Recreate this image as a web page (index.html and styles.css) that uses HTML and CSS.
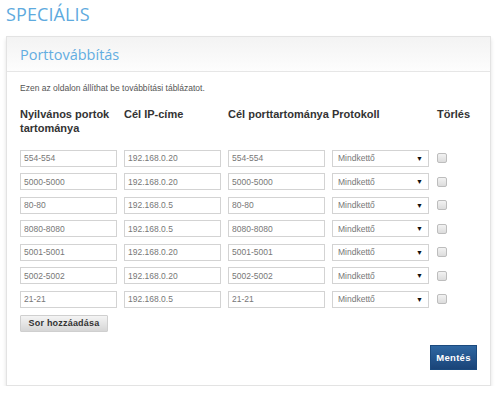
FILE: index.html
```html
<!DOCTYPE html>
<html lang="hu">
<head>
<meta charset="utf-8">
<title>Speciális</title>
<link rel="stylesheet" href="styles.css">
</head>
<body>
<h1 class="page-title">SPECIÁLIS</h1>
<section class="panel">
  <header class="panel-head"><h2 class="panel-title">Porttovábbítás</h2></header>
  <div class="panel-body">
    <p class="desc">Ezen az oldalon állíthat be továbbítási táblázatot.</p>
    <div class="grid">
      <div class="th">Nyilvános portok tartománya</div>
      <div class="th">Cél IP-címe</div>
      <div class="th th-nowrap">Cél porttartománya</div>
      <div class="th">Protokoll</div>
      <div class="th th-del">Törlés</div>

      <input class="field" value="554-554"><input class="field" value="192.168.0.20"><input class="field" value="554-554">
      <div class="sel">Mindkettő<span class="arrow">▼</span></div><span class="chk"></span>

      <input class="field" value="5000-5000"><input class="field" value="192.168.0.20"><input class="field" value="5000-5000">
      <div class="sel">Mindkettő<span class="arrow">▼</span></div><span class="chk"></span>

      <input class="field" value="80-80"><input class="field" value="192.168.0.5"><input class="field" value="80-80">
      <div class="sel">Mindkettő<span class="arrow">▼</span></div><span class="chk"></span>

      <input class="field" value="8080-8080"><input class="field" value="192.168.0.5"><input class="field" value="8080-8080">
      <div class="sel">Mindkettő<span class="arrow">▼</span></div><span class="chk"></span>

      <input class="field" value="5001-5001"><input class="field" value="192.168.0.20"><input class="field" value="5001-5001">
      <div class="sel">Mindkettő<span class="arrow">▼</span></div><span class="chk"></span>

      <input class="field" value="5002-5002"><input class="field" value="192.168.0.20"><input class="field" value="5002-5002">
      <div class="sel">Mindkettő<span class="arrow">▼</span></div><span class="chk"></span>

      <input class="field" value="21-21"><input class="field" value="192.168.0.5"><input class="field" value="21-21">
      <div class="sel">Mindkettő<span class="arrow">▼</span></div><span class="chk"></span>
    </div>
    <button class="btn-add">Sor hozzáadása</button>
    <div class="actions"><button class="btn-save">Mentés</button></div>
  </div>
</section>
</body>
</html>
```
FILE: styles.css
```css
html, body { margin: 0; padding: 0; background: #fff; }
body {
  padding: 0 9px 0 6px;
  font-family: "Liberation Sans", Arial, sans-serif;
  color: #333;
}
.page-title {
  margin: 0;
  padding-top: 3px;
  height: 33px;
  font-family: "Open Sans", sans-serif;
  font-weight: 500;
  font-size: 18px;
  line-height: 22px;
  color: #5eaade;
  letter-spacing: 0.1px;
}
.panel {
  width: 483px;
  border: 1px solid #e3e3e3;
  background: #fff;
  box-shadow: 0 3px 4px rgba(0,0,0,0.12);
}
.panel-head {
  height: 34px;
  border-bottom: 1px solid #e6e6e6;
  background: linear-gradient(#f3f3f3, #fdfdfd);
  padding: 0 13px;
  display: flex;
  align-items: center;
}
.panel-title {
  margin: 0;
  font-family: "Open Sans", sans-serif;
  font-weight: 400;
  font-size: 14.5px;
  color: #62ade1;
}
.panel-body { padding: 11px 13px 15px; }
.desc {
  margin: 0 0 13px;
  font-size: 8.5px;
  line-height: 11px;
  color: #555;
}
.grid {
  display: grid;
  grid-template-columns: 97px 97px 97px 97px auto;
  column-gap: 7px;
  row-gap: 6.5px;
  align-items: center;
}
.th {
  align-self: start;
  font-weight: bold;
  font-size: 11px;
  line-height: 14px;
  color: #333;
  margin-bottom: 6px;
  height: 30px;
}
.th-nowrap { white-space: nowrap; }
.th-del { padding-left: 1px; }
.field, .sel {
  box-sizing: border-box;
  height: 17px;
  width: 97px;
  margin: 0;
  border: 1px solid #d3d3d3;
  background: #fff;
  font-family: "Liberation Sans", Arial, sans-serif;
  font-size: 8.5px;
  color: #777;
  padding: 0 3px;
  outline: none;
}
.sel {
  display: flex;
  align-items: center;
  justify-content: space-between;
  padding: 0 5px 0 5px;
}
.arrow { color: #111; font-size: 7px; }
.chk {
  width: 8px;
  height: 8px;
  border: 1px solid #bdbdbd;
  border-radius: 2px;
  background: linear-gradient(#f2f2f2, #dcdcdc);
  margin-left: 1px;
}
.btn-add {
  margin-top: 7px;
  height: 17px;
  width: 88px;
  padding: 0;
  border: 1px solid #cfcfcf;
  border-radius: 1px;
  background: linear-gradient(#f4f4f4, #d6d6d6);
  font-family: "Liberation Sans", Arial, sans-serif;
  font-weight: bold;
  font-size: 9px;
  letter-spacing: 0.2px;
  color: #333;
}
.actions { display: flex; justify-content: flex-end; margin-top: 13px; }
.btn-save {
  width: 47px;
  height: 25px;
  padding: 0;
  border: 1px solid #1b4a7e;
  background: linear-gradient(#2f67a2, #1a4478);
  color: #fff;
  font-family: "Liberation Sans", Arial, sans-serif;
  font-weight: bold;
  font-size: 9.5px;
  letter-spacing: 0.3px;
}
```
